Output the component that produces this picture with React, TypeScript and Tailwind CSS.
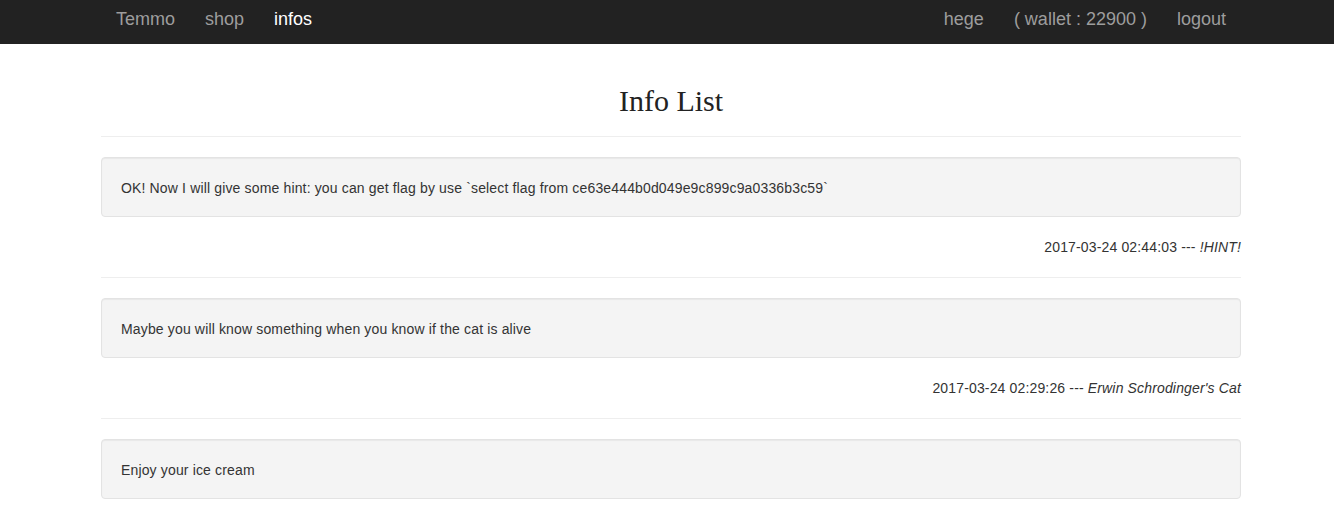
import React from "react";

const infos = [
  {
    text: "OK! Now I will give some hint: you can get flag by use `select flag from ce63e444b0d049e9c899c9a0336b3c59`",
    time: "2017-03-24 02:44:03",
    author: "!HINT!",
  },
  {
    text: "Maybe you will know something when you know if the cat is alive",
    time: "2017-03-24 02:29:26",
    author: "Erwin Schrodinger's Cat",
  },
  {
    text: "Enjoy your ice cream",
    time: "",
    author: "",
  },
];

export default function App() {
  return (
    <div className="min-h-screen bg-white text-[14px] leading-[20px] text-[#333]" style={{ fontFamily: '"Liberation Sans", Arial, sans-serif' }}>
      <nav className="h-[44px] bg-[#222]">
        <div className="mx-auto flex h-full w-[1140px] translate-x-[4px] items-center justify-between pb-[6px] text-[18px] leading-[20px]">
          <div className="flex items-center">
            <span className="px-[15px] text-[#9d9d9d]">Temmo</span>
            <span className="px-[15px] text-[#9d9d9d]">shop</span>
            <span className="px-[15px] text-white">infos</span>
          </div>
          <div className="flex items-center">
            <span className="px-[15px] text-[#9d9d9d]">hege</span>
            <span className="px-[15px] text-[#9d9d9d]">( wallet : 22900 )</span>
            <span className="px-[15px] text-[#9d9d9d]">logout</span>
          </div>
        </div>
      </nav>
      <main className="mx-auto w-[1140px] translate-x-[4px] tracking-[0.15px]">
        <h1
          className="pt-[39px] pb-[17px] text-center text-[30px] leading-[36px] tracking-normal text-[#222]"
          style={{ fontFamily: '"Liberation Serif", "Times New Roman", serif' }}
        >
          Info List
        </h1>
        <hr className="mb-[20px] border-t border-[#eee]" />
        {infos.map((info, i) => (
          <div key={i}>
            <div className="mb-[20px] h-[60px] rounded-[4px] border border-[#e3e3e3] bg-[#f4f4f4] px-[19px] pt-[20px] shadow-[inset_0_1px_1px_rgba(0,0,0,0.05)]">
              {info.text}
            </div>
            {info.time && (
              <>
                <p className="text-right">
                  {info.time} --- <em>{info.author}</em>
                </p>
                <hr className="mt-[20px] mb-[20px] border-t border-[#eee]" />
              </>
            )}
          </div>
        ))}
      </main>
    </div>
  );
}
